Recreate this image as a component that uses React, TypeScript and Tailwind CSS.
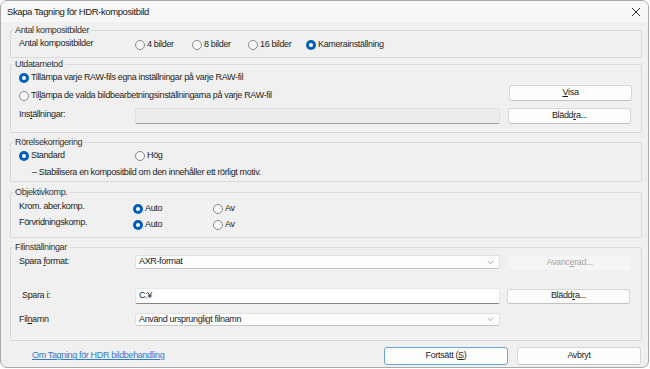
import { ChevronDown } from "lucide-react";
import type { ReactNode } from "react";

const font = { fontFamily: '"Liberation Sans", Arial, sans-serif' };

function Radio({ label, checked = false }: { label: ReactNode; checked?: boolean }) {
  return (
    <span className="flex items-center h-[12px]">
      {checked ? (
        <span className="flex items-center justify-center w-[10px] h-[10px] rounded-full bg-[#005fb8] shrink-0">
          <span className="w-[4px] h-[4px] rounded-full bg-white" />
        </span>
      ) : (
        <span className="w-[10px] h-[10px] rounded-full border border-[#8a8a8a] bg-[#f7f7f7] shrink-0" />
      )}
      <span className="ml-[2px] whitespace-nowrap">{label}</span>
    </span>
  );
}

function Group({
  title,
  className,
  children,
}: {
  title: string;
  className: string;
  children: ReactNode;
}) {
  return (
    <div className={`relative ml-[9px] w-[632px] border border-[#dadada] rounded-[2px] ${className}`}>
      <span className="absolute -top-[7px] left-[2px] px-[2px] leading-[12px] bg-[#f0f0f0] text-[#333]">
        {title}
      </span>
      {children}
    </div>
  );
}

function Button({
  children,
  className = "",
  disabled = false,
}: {
  children: ReactNode;
  className?: string;
  disabled?: boolean;
}) {
  return (
    <div
      className={`flex items-center justify-center w-[123px] rounded-[3px] ${
        disabled
          ? "bg-[#f5f5f5] text-[#a5a5a5]"
          : "bg-[#fdfdfd] border border-[#d6d6d6] border-b-[#c2c2c2] text-[#1b1b1b]"
      } ${className}`}
    >
      {children}
    </div>
  );
}

function Select({ value, className = "" }: { value: string; className?: string }) {
  return (
    <div
      className={`flex items-center justify-between w-[365px] pl-[3px] pr-[4px] bg-[#fcfcfc] border border-[#e2e2e2] border-b-[#c8c8c8] rounded-[3px] ${className}`}
    >
      <span>{value}</span>
      <ChevronDown size={9} strokeWidth={1.4} color="#606060" />
    </div>
  );
}

export default function App() {
  return (
    <div className="w-[650px] h-[369px] bg-white text-[9px] tracking-[-0.35px] text-[#1e1e1e]" style={font}>
      <div className="w-[649px] h-[368px] rounded-[7px] border border-[#a9a9a9] bg-[#f0f0f0] overflow-hidden flex flex-col">
        {/* title bar */}
        <div className="h-[21px] shrink-0 flex items-center justify-between pl-[6px] pr-[6px] bg-[#f7f7f7]">
          <span className="text-[9.5px] tracking-[-0.4px] text-[#1a1a1a] mt-[1px]">
            Skapa Tagning för HDR-kompositbild
          </span>
          <svg width="10" height="10" viewBox="0 0 10 10" className="mr-[1px] mt-[1px]">
            <path d="M1 1 L9 9 M9 1 L1 9" stroke="#2b2b2b" strokeWidth="1" fill="none" />
          </svg>
        </div>

        {/* Antal kompositbilder */}
        <Group title="Antal kompositbilder" className="mt-[8px] h-[28px] pl-[8px] pt-[8px]">
          <div className="flex items-center h-[12px]">
            <span className="w-[116px] -mt-[2px]">Antal kompositbilder</span>
            <span className="w-[57px]">
              <Radio label="4 bilder" />
            </span>
            <span className="w-[56px]">
              <Radio label="8 bilder" />
            </span>
            <span className="w-[58px]">
              <Radio label="16 bilder" />
            </span>
            <Radio label="Kamerainställning" checked />
          </div>
        </Group>

        {/* Utdatametod */}
        <Group title="Utdatametod" className="mt-[6px] h-[69px] pl-[8px] pr-[9px] pt-[7px]">
          <Radio label="Tillämpa varje RAW-fils egna inställningar på varje RAW-fil" checked />
          <div className="flex items-start justify-between h-[16px] mt-[1px]">
            <span className="mt-[5px]">
              <Radio
                label={
                  <>
                    Til<span className="underline">l</span>ämpa de valda bildbearbetningsinställningarna på varje RAW-fil
                  </>
                }
              />
            </span>
            <Button className="h-[16px]">
              <span className="underline">V</span>isa
            </Button>
          </div>
          <div className="flex items-start mt-[7px]">
            <span className="w-[116px] mt-[0px] leading-[12px]">
              Ins<span className="underline">t</span>ällningar:
            </span>
            <div className="w-[365px] h-[16px] bg-[#ececec] border border-[#e2e2e2] border-b-[#a0a0a0] rounded-[2px]" />
            <Button className="h-[16px] ml-[8px]">
              Blädd<span className="underline">r</span>a...
            </Button>
          </div>
        </Group>

        {/* Rörelsekorrigering */}
        <Group title="Rörelsekorrigering" className="mt-[9px] h-[40px] pl-[8px] pt-[7px]">
          <div className="flex items-center">
            <span className="w-[116px]">
              <Radio label="Standard" checked />
            </span>
            <Radio label="Hög" />
          </div>
          <div className="mt-[4px] ml-[13px] leading-[12px]">
            – Stabilisera en kompositbild om den innehåller ett rörligt motiv.
          </div>
        </Group>

        {/* Objektivkomp. */}
        <Group title="Objektivkomp." className="mt-[10px] h-[46px] pl-[8px] pt-[7px]">
          <div className="flex items-start">
            <span className="w-[114px] leading-[12px]">Krom. aber.komp.</span>
            <span className="w-[80px] mt-[3px]">
              <Radio label="Auto" checked />
            </span>
            <span className="mt-[3px]">
              <Radio label="Av" />
            </span>
          </div>
          <div className="flex items-start mt-[1px]">
            <span className="w-[114px] leading-[12px]">Förvridningskomp.</span>
            <span className="w-[80px] mt-[3px]">
              <Radio label="Auto" checked />
            </span>
            <span className="mt-[3px]">
              <Radio label="Av" />
            </span>
          </div>
        </Group>

        {/* Filinställningar */}
        <Group title="Filinställningar" className="mt-[9px] h-[94px] pl-[8px] pt-[7px]">
          <div className="flex items-start h-[16px]">
            <span className="w-[116px] leading-[12px]">
              Spara <span className="underline">f</span>ormat:
            </span>
            <Select value="AXR-format" className="h-[14px]" />
            <Button disabled className="h-[14px] ml-[8px] mt-[1px]">
              Avanc<span className="underline">e</span>rad...
            </Button>
          </div>
          <div className="flex items-center mt-[17px]">
            <span className="w-[116px] pl-[3px]">Spara i:</span>
            <div className="w-[365px] h-[16px] flex items-center pl-[3px] bg-white border border-[#e6e6e6] border-b-[#868686] rounded-[2px]">
              C:¥
            </div>
            <Button className="h-[15px] ml-[7px]">
              Blädd<span className="underline">r</span>a...
            </Button>
          </div>
          <div className="flex items-center mt-[8px]">
            <span className="w-[116px] mt-[1px]">
              Fil<span className="underline">n</span>amn
            </span>
            <Select value="Använd ursprungligt filnamn" className="h-[13px]" />
          </div>
        </Group>

        {/* bottom row */}
        <div className="flex items-center mt-[6px] h-[18px] pl-[31px]">
          <span className="text-[#2f7bd3] underline flex-1">Om Tagning för HDR bildbehandling</span>
          <div className="flex items-center justify-center w-[124px] h-[18px] rounded-[3px] bg-[#fdfdfd] border border-[#6aa3dc]">
            Fortsätt (<span className="underline">S</span>)
          </div>
          <div className="flex items-center justify-center w-[124px] h-[18px] ml-[9px] mr-[7px] rounded-[3px] bg-[#fdfdfd] border border-[#d6d6d6] border-b-[#c2c2c2]">
            Avbryt
          </div>
        </div>
      </div>
    </div>
  );
}
